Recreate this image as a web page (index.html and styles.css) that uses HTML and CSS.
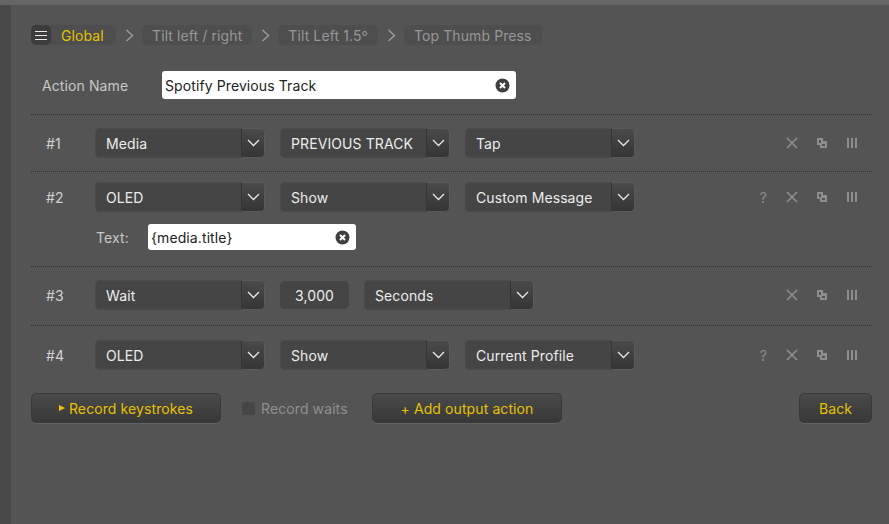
FILE: index.html
```html
<!DOCTYPE html>
<html lang="en">
<head>
<meta charset="utf-8">
<title>Action</title>
<link rel="stylesheet" href="styles.css">
</head>
<body>
<div class="topbar"></div>
<div class="shell">
  <aside class="rail"></aside>
  <main class="main">
    <nav class="crumbs">
      <span class="crumb crumb-first">
        <span class="menu"><svg width="14" height="11" viewBox="0 0 14 11"><path d="M1 1.5h12M1 5.5h12M1 9.5h12" stroke="#e8e8e8" stroke-width="1.2" fill="none"/></svg></span>
        <span class="crumb-global">Global</span>
      </span>
      <svg class="chev" width="9" height="13" viewBox="0 0 9 13"><path d="M1.5 1l6 5.5-6 5.5" stroke="#a0a0a0" stroke-width="1.3" fill="none"/></svg>
      <span class="crumb">Tilt left / right</span>
      <svg class="chev" width="9" height="13" viewBox="0 0 9 13"><path d="M1.5 1l6 5.5-6 5.5" stroke="#a0a0a0" stroke-width="1.3" fill="none"/></svg>
      <span class="crumb">Tilt Left 1.5º</span>
      <svg class="chev" width="9" height="13" viewBox="0 0 9 13"><path d="M1.5 1l6 5.5-6 5.5" stroke="#a0a0a0" stroke-width="1.3" fill="none"/></svg>
      <span class="crumb">Top Thumb Press</span>
    </nav>

    <div class="name-row">
      <label class="name-label">Action Name</label>
      <div class="field field-name"><span>Spotify Previous Track</span>
        <svg class="clear" width="15" height="15" viewBox="0 0 15 15"><circle cx="7.5" cy="7.5" r="7" fill="#3f3f3f"/><path d="M5 5l5 5M10 5l-5 5" stroke="#fff" stroke-width="2"/></svg>
      </div>
    </div>

    <section class="row row-1">
      <div class="controls">
        <span class="num">#1</span>
        <div class="select"><span class="val">Media</span><span class="arrow"><svg width="13" height="8" viewBox="0 0 13 8"><path d="M1 1l5.5 5.5L12 1" stroke="#e8e8e8" stroke-width="1.3" fill="none"/></svg></span></div>
        <div class="select"><span class="val">PREVIOUS TRACK</span><span class="arrow"><svg width="13" height="8" viewBox="0 0 13 8"><path d="M1 1l5.5 5.5L12 1" stroke="#e8e8e8" stroke-width="1.3" fill="none"/></svg></span></div>
        <div class="select"><span class="val">Tap</span><span class="arrow"><svg width="13" height="8" viewBox="0 0 13 8"><path d="M1 1l5.5 5.5L12 1" stroke="#e8e8e8" stroke-width="1.3" fill="none"/></svg></span></div>
        <div class="tools">
          <svg class="tool" width="12" height="12" viewBox="0 0 12 12"><path d="M1 1l10 10M11 1L1 11" stroke="#8e8e8e" stroke-width="1.6"/></svg>
          <svg class="tool" width="10" height="10" viewBox="0 0 10 10"><path d="M0 0h6v3h4v7H3V7H0zM2 2v3h2V2zM5 6v2h3V6z" fill="#8e8e8e" fill-rule="evenodd"/></svg>
          <svg class="tool" width="10" height="10" viewBox="0 0 10 10"><path d="M0 0h2v10H0zM4 0h2v10H4zM8 0h2v10H8z" fill="#8e8e8e"/></svg>
        </div>
      </div>
    </section>

    <section class="row row-2">
      <div class="controls">
        <span class="num">#2</span>
        <div class="select"><span class="val">OLED</span><span class="arrow"><svg width="13" height="8" viewBox="0 0 13 8"><path d="M1 1l5.5 5.5L12 1" stroke="#e8e8e8" stroke-width="1.3" fill="none"/></svg></span></div>
        <div class="select"><span class="val">Show</span><span class="arrow"><svg width="13" height="8" viewBox="0 0 13 8"><path d="M1 1l5.5 5.5L12 1" stroke="#e8e8e8" stroke-width="1.3" fill="none"/></svg></span></div>
        <div class="select"><span class="val">Custom Message</span><span class="arrow"><svg width="13" height="8" viewBox="0 0 13 8"><path d="M1 1l5.5 5.5L12 1" stroke="#e8e8e8" stroke-width="1.3" fill="none"/></svg></span></div>
        <div class="tools">
          <span class="help">?</span>
          <svg class="tool" width="12" height="12" viewBox="0 0 12 12"><path d="M1 1l10 10M11 1L1 11" stroke="#8e8e8e" stroke-width="1.6"/></svg>
          <svg class="tool" width="10" height="10" viewBox="0 0 10 10"><path d="M0 0h6v3h4v7H3V7H0zM2 2v3h2V2zM5 6v2h3V6z" fill="#8e8e8e" fill-rule="evenodd"/></svg>
          <svg class="tool" width="10" height="10" viewBox="0 0 10 10"><path d="M0 0h2v10H0zM4 0h2v10H4zM8 0h2v10H8z" fill="#8e8e8e"/></svg>
        </div>
      </div>
      <div class="text-line">
        <label class="text-label">Text:</label>
        <div class="field field-text"><span>{media.title}</span>
          <svg class="clear" width="15" height="15" viewBox="0 0 15 15"><circle cx="7.5" cy="7.5" r="7" fill="#3f3f3f"/><path d="M5 5l5 5M10 5l-5 5" stroke="#fff" stroke-width="2"/></svg>
        </div>
      </div>
    </section>

    <section class="row row-3">
      <div class="controls">
        <span class="num">#3</span>
        <div class="select"><span class="val">Wait</span><span class="arrow"><svg width="13" height="8" viewBox="0 0 13 8"><path d="M1 1l5.5 5.5L12 1" stroke="#e8e8e8" stroke-width="1.3" fill="none"/></svg></span></div>
        <div class="number">3,000</div>
        <div class="select"><span class="val">Seconds</span><span class="arrow"><svg width="13" height="8" viewBox="0 0 13 8"><path d="M1 1l5.5 5.5L12 1" stroke="#e8e8e8" stroke-width="1.3" fill="none"/></svg></span></div>
        <div class="tools">
          <svg class="tool" width="12" height="12" viewBox="0 0 12 12"><path d="M1 1l10 10M11 1L1 11" stroke="#8e8e8e" stroke-width="1.6"/></svg>
          <svg class="tool" width="10" height="10" viewBox="0 0 10 10"><path d="M0 0h6v3h4v7H3V7H0zM2 2v3h2V2zM5 6v2h3V6z" fill="#8e8e8e" fill-rule="evenodd"/></svg>
          <svg class="tool" width="10" height="10" viewBox="0 0 10 10"><path d="M0 0h2v10H0zM4 0h2v10H4zM8 0h2v10H8z" fill="#8e8e8e"/></svg>
        </div>
      </div>
    </section>

    <section class="row row-4">
      <div class="controls">
        <span class="num">#4</span>
        <div class="select"><span class="val">OLED</span><span class="arrow"><svg width="13" height="8" viewBox="0 0 13 8"><path d="M1 1l5.5 5.5L12 1" stroke="#e8e8e8" stroke-width="1.3" fill="none"/></svg></span></div>
        <div class="select"><span class="val">Show</span><span class="arrow"><svg width="13" height="8" viewBox="0 0 13 8"><path d="M1 1l5.5 5.5L12 1" stroke="#e8e8e8" stroke-width="1.3" fill="none"/></svg></span></div>
        <div class="select"><span class="val">Current Profile</span><span class="arrow"><svg width="13" height="8" viewBox="0 0 13 8"><path d="M1 1l5.5 5.5L12 1" stroke="#e8e8e8" stroke-width="1.3" fill="none"/></svg></span></div>
        <div class="tools">
          <span class="help">?</span>
          <svg class="tool" width="12" height="12" viewBox="0 0 12 12"><path d="M1 1l10 10M11 1L1 11" stroke="#8e8e8e" stroke-width="1.6"/></svg>
          <svg class="tool" width="10" height="10" viewBox="0 0 10 10"><path d="M0 0h6v3h4v7H3V7H0zM2 2v3h2V2zM5 6v2h3V6z" fill="#8e8e8e" fill-rule="evenodd"/></svg>
          <svg class="tool" width="10" height="10" viewBox="0 0 10 10"><path d="M0 0h2v10H0zM4 0h2v10H4zM8 0h2v10H8z" fill="#8e8e8e"/></svg>
        </div>
      </div>
    </section>

    <footer class="actions">
      <button class="btn btn-record"><svg class="play" width="6" height="6" viewBox="0 0 6 6"><path d="M0 0l6 3-6 3z" fill="#f0c800"/></svg>Record keystrokes</button>
      <label class="waits"><span class="check"></span>Record waits</label>
      <button class="btn btn-add">+ Add output action</button>
      <button class="btn btn-back">Back</button>
    </footer>
  </main>
</div>
</body>
</html>
```

FILE: styles.css
```css
* { box-sizing: border-box; }
html, body { margin: 0; height: 100%; overflow: hidden; }
body {
  background: #545454;
  color: #e6e6e6;
  font-family: "Inter", "Liberation Sans", sans-serif;
  font-size: 14px;
  letter-spacing: 0.1px;
}
.topbar { height: 5px; background: #666; }
.shell { display: flex; height: 519px; }
.rail { width: 11px; background: #494949; flex: none; }
.main { flex: 1; padding: 20px 17px 0 20px; }

.crumbs { display: flex; align-items: center; height: 20px; }
.crumb {
  display: flex; align-items: center; height: 20px;
  padding: 0 10px; border-radius: 5px;
  background: #4e4e4e; color: #979797;
}
.crumb-first { padding: 0 10px 0 0; width: 85px; }
.menu {
  width: 20px; height: 20px; border-radius: 5px; background: #3c3c3c;
  display: flex; align-items: center; justify-content: center;
  margin-right: 10px;
}
.crumb-global { color: #e6c200; }
.chev { margin: 0 8px 0 9px; flex: none; }

.name-row { display: flex; align-items: center; height: 28px; margin-top: 26px; }
.name-label { width: 131px; padding-left: 11px; color: #c8c8c8; }
.field {
  display: flex; align-items: center; justify-content: space-between;
  background: #fff; color: #222; border-radius: 3px;
}
.field-name { width: 354px; height: 28px; padding: 0 6px 0 3px; }
.field-text { width: 208px; height: 26px; padding: 0 6px 0 3px; }
.clear { flex: none; }

.row { border-top: 1px dotted #2f2f2f; }
.row-1 { margin-top: 15px; padding: 13px 0 13px; }
.row-2 { padding: 10px 0 16px; }
.row-3 { padding: 13px 0 15px; }
.row-4 { padding: 14px 0 0; }

.controls { display: flex; align-items: center; height: 30px; }
.num { width: 64px; padding-left: 15px; color: #d2d2d2; flex: none; }
.select {
  display: flex; align-items: center; justify-content: space-between;
  width: 170px; height: 30px; margin-right: 15px; flex: none;
  background: #454545; border-radius: 5px; color: #ececec;
  box-shadow: inset 0 0 0 1px #4b4b4b;
}
.val { padding-left: 11px; white-space: nowrap; }
.arrow {
  display: flex; align-items: center; justify-content: center;
  width: 24px; height: 30px; flex: none;
  background: linear-gradient(#4a4a4a, #353535);
  border: 1px solid #5a5a5a; border-left-color: #353535; border-radius: 0 5px 5px 0;
}
.number {
  width: 69px; height: 28px; margin-right: 15px; flex: none;
  display: flex; align-items: center; justify-content: center;
  background: #454545; border-radius: 5px; color: #ececec;
}
.tools { margin-left: auto; display: flex; align-items: center; gap: 20px; padding-right: 15px; }
.tool { flex: none; display: block; }
.help { color: #8e8e8e; font-size: 14px; margin-right: -1px; }
.tools .tool:nth-last-child(2) { margin-left: -1px; }

.text-line { display: flex; align-items: center; margin-top: 12px; }
.text-label { width: 117px; padding-left: 65px; color: #c8c8c8; }

.actions { display: flex; align-items: center; margin-top: 23px; }
.btn {
  height: 30px; border: 1px solid #3a3a3a; border-radius: 5px;
  background: linear-gradient(#4a4a4a, #383838);
  color: #e6c200; font: inherit; letter-spacing: inherit; padding: 0;
  box-shadow: 0 1px 0 #626262;
  display: flex; align-items: center; justify-content: center;
}
.btn-record { width: 190px; }
.play { margin-right: 4px; }
.waits { display: flex; align-items: center; margin-left: 21px; width: 130px; color: #8f8f8f; }
.check { width: 13px; height: 13px; border-radius: 3px; background: #464646; margin-right: 6px; }
.btn-add { width: 190px; }
.btn-back { width: 73px; margin-left: auto; }
```
